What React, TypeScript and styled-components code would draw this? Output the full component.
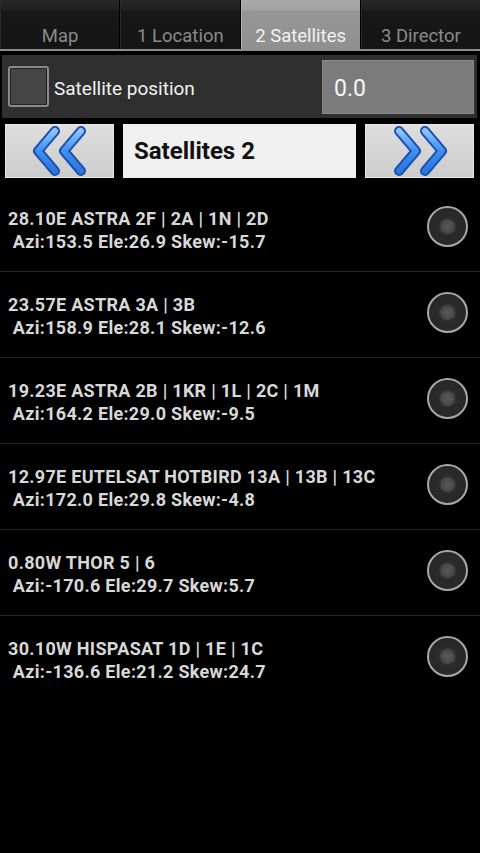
import styled, { createGlobalStyle } from "styled-components"

const GlobalStyle = createGlobalStyle`
  html, body {
    margin: 0;
    padding: 0;
    background: #000;
  }
  body {
    font-family: Roboto, "Noto Sans", sans-serif;
    width: 480px;
    height: 853px;
    overflow: hidden;
  }
`

const Screen = styled.div`
  width: 480px;
  height: 853px;
  background: #000;
  display: flex;
  flex-direction: column;
`

const TabBar = styled.div`
  display: grid;
  grid-template-columns: repeat(4, 1fr);
  gap: 1px;
  height: 49px;
  background: #000;
  border-bottom: 2px solid #8c8c8c;
`

const Tab = styled.div<{ $active?: boolean }>`
  display: flex;
  align-items: flex-end;
  justify-content: center;
  padding-bottom: 2px;
  box-sizing: border-box;
  font-size: 18.5px;
  color: ${(p) => (p.$active ? "#f2f2f2" : "#8a8a8a")};
  background: ${(p) =>
    p.$active
      ? "linear-gradient(#a9a9a9 0%, #a2a2a2 20%, #969696 22%, #909090 100%)"
      : "linear-gradient(#262626 0%, #202020 20%, #181818 22%, #141414 100%)"};
  border-left: 1px solid ${(p) => (p.$active ? "#b0b0b0" : "#2a2a2a")};
`

const PositionPanel = styled.div`
  margin: 4px 3px 0 2px;
  height: 63px;
  background: #2f2f2f;
  display: flex;
  align-items: center;
  padding: 0 3px 0 6px;
`

const Checkbox = styled.div`
  width: 37px;
  height: 37px;
  border: 2px solid #8a8a8a;
  border-radius: 3px;
  background: #454545;
  box-shadow: inset 0 0 0 1px #222;
`

const PositionLabel = styled.span`
  margin-left: 5px;
  padding-top: 3px;
  flex: 1;
  font-size: 19px;
  color: #f2f2f2;
`

const PositionInput = styled.div`
  width: 152px;
  height: 54px;
  box-sizing: border-box;
  background: #7b7b7b;
  border: 1px solid #8a8a8a;
  display: flex;
  align-items: center;
  padding: 3px 0 0 11px;
  font-size: 23px;
  color: #f6f6f6;
`

const NavRow = styled.div`
  display: flex;
  align-items: center;
  gap: 9px;
  margin: 6px 6px 0 5px;
  height: 54px;
`

const ArrowButton = styled.div`
  width: 109px;
  height: 54px;
  background: linear-gradient(#dedede, #cccccc);
  border: 1px solid #e8e8e8;
  box-sizing: border-box;
  display: flex;
  align-items: center;
  justify-content: center;
`

const SetField = styled.div`
  flex: 1;
  height: 54px;
  background: #f0f0f0;
  display: flex;
  align-items: center;
  padding-left: 11px;
  font-size: 24px;
  font-weight: 700;
  color: #111;
`

const List = styled.div`
  margin-top: 8px;
  display: flex;
  flex-direction: column;
`

const Row = styled.div<{ $last?: boolean }>`
  height: 85px;
  display: flex;
  align-items: center;
  padding: 0 12px 0 8px;
  border-bottom: 1px solid ${(p) => (p.$last ? "transparent" : "#232323")};
`

const RowText = styled.div`
  flex: 1;
  font-size: 18px;
  letter-spacing: 0.3px;
  font-weight: 700;
  line-height: 23px;
  color: #d8d8d8;
  white-space: pre;
  margin-top: 2px;
`

const Radio = styled.div`
  width: 37px;
  height: 37px;
  border-radius: 50%;
  border: 2px solid #a8a8a8;
  background: radial-gradient(circle, #5a5a5a 0, #4a4a4a 6px, #2a2a2a 9px, #262626 100%);
  margin-top: -4px;
`

const Chevrons = ({ flip }: { flip?: boolean }) => (
  <svg width="56" height="50" viewBox="0 0 56 50" style={flip ? { transform: "scaleX(-1)" } : undefined}>
    <defs>
      <linearGradient id={flip ? "gr" : "gl"} x1="0" y1="0" x2="0" y2="1">
        <stop offset="0" stopColor="#8cc4ff" />
        <stop offset="0.5" stopColor="#3f8ff0" />
        <stop offset="1" stopColor="#2a74de" />
      </linearGradient>
    </defs>
    {[0, 26].map((dx) => (
      <g key={dx}>
        <path
          d={`M${23 + dx} 5 L${6 + dx} 25 L${23 + dx} 45`}
          fill="none"
          stroke="#1d4fb0"
          strokeWidth="10"
          strokeLinecap="round"
          strokeLinejoin="round"
        />
        <path
          d={`M${23 + dx} 5 L${6 + dx} 25 L${23 + dx} 45`}
          fill="none"
          stroke={`url(#${flip ? "gr" : "gl"})`}
          strokeWidth="6"
          strokeLinecap="round"
          strokeLinejoin="round"
        />
      </g>
    ))}
  </svg>
)

const satellites = [
  { name: "28.10E ASTRA 2F | 2A | 1N | 2D", info: "Azi:153.5 Ele:26.9 Skew:-15.7" },
  { name: "23.57E ASTRA 3A | 3B", info: "Azi:158.9 Ele:28.1 Skew:-12.6" },
  { name: "19.23E ASTRA 2B | 1KR | 1L | 2C | 1M", info: "Azi:164.2 Ele:29.0 Skew:-9.5" },
  { name: "12.97E EUTELSAT HOTBIRD 13A | 13B | 13C", info: "Azi:172.0 Ele:29.8 Skew:-4.8" },
  { name: "0.80W THOR 5 | 6", info: "Azi:-170.6 Ele:29.7 Skew:5.7" },
  { name: "30.10W HISPASAT 1D | 1E | 1C", info: "Azi:-136.6 Ele:21.2 Skew:24.7" },
]

const tabs = ["Map", "1 Location", "2 Satellites", "3 Director"]

export default function App() {
  return (
    <Screen>
      <GlobalStyle />
      <TabBar>
        {tabs.map((t, i) => (
          <Tab key={t} $active={i === 2}>
            {t}
          </Tab>
        ))}
      </TabBar>
      <PositionPanel>
        <Checkbox />
        <PositionLabel>Satellite position</PositionLabel>
        <PositionInput>0.0</PositionInput>
      </PositionPanel>
      <NavRow>
        <ArrowButton>
          <Chevrons />
        </ArrowButton>
        <SetField>Satellites 2</SetField>
        <ArrowButton>
          <Chevrons flip />
        </ArrowButton>
      </NavRow>
      <List>
        {satellites.map((s, i) => (
          <Row key={s.name} $last={i === satellites.length - 1}>
            <RowText>
              {s.name}
              {"\n "}
              {s.info}
            </RowText>
            <Radio />
          </Row>
        ))}
      </List>
    </Screen>
  )
}
